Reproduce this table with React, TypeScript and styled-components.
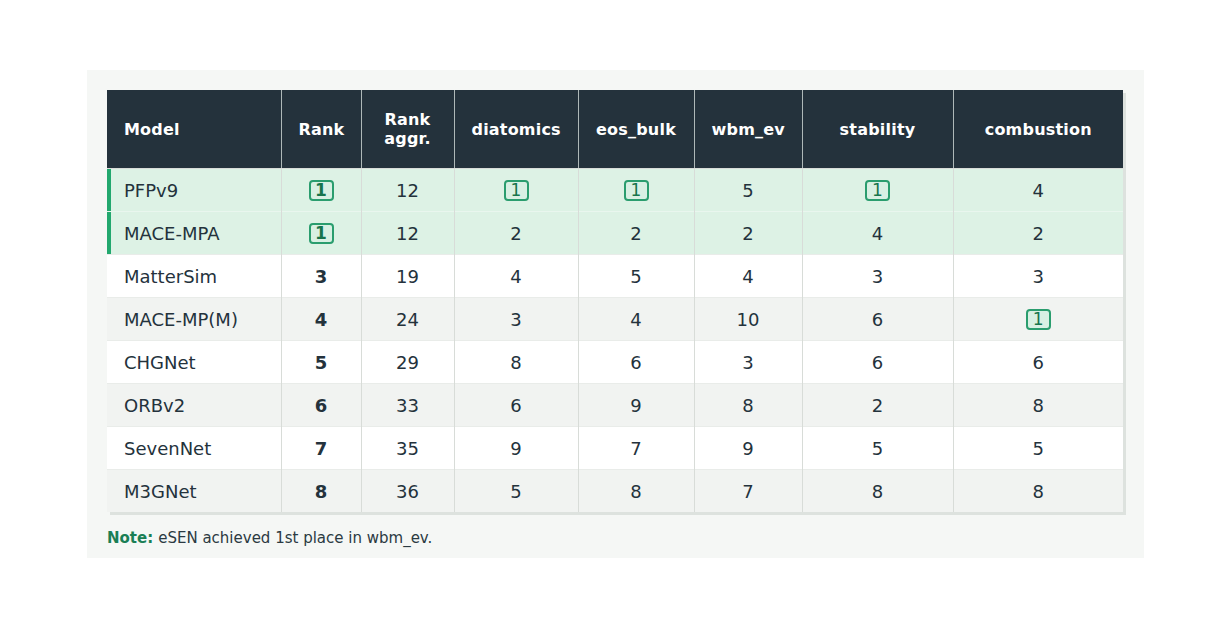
import React from 'react';
import styled, { createGlobalStyle } from 'styled-components';

const GlobalStyle = createGlobalStyle`
  html, body {
    margin: 0;
    padding: 0;
    background: #ffffff;
    font-family: 'DejaVu Sans', 'Liberation Sans', sans-serif;
  }
`;

const Page = styled.div`
  padding: 70px 0 0 87px;
`;

const Panel = styled.div`
  width: 1057px;
  box-sizing: border-box;
  background: #f5f7f5;
  padding: 20px 20px 10px 20px;
`;

const Table = styled.table`
  width: 1016px;
  border-collapse: collapse;
  table-layout: fixed;
  box-shadow: 3px 3px 0 #dde2de;
  color: #24323c;
`;

const HeadCell = styled.th<{ $left?: boolean }>`
  height: 78px;
  padding: 0 17px;
  background: #24323c;
  color: #ffffff;
  font-size: 16px;
  font-weight: bold;
  letter-spacing: 0.2px;
  line-height: 19px;
  text-align: ${({ $left }) => ($left ? 'left' : 'center')};
  border-left: 1px solid #aeb8b8;
  border-bottom: 1px solid #d8dcd8;
  &:first-child {
    border-left: none;
  }
`;

const Row = styled.tr<{ $tone: 'top' | 'plain' | 'stripe' }>`
  background: ${({ $tone }) =>
    $tone === 'top' ? '#ddf2e5' : $tone === 'stripe' ? '#f1f3f1' : '#ffffff'};
  border-top: 1px solid ${({ $tone }) => ($tone === 'top' ? '#e9f6ee' : '#e9ece9')};
`;

const Cell = styled.td<{ $left?: boolean; $bold?: boolean; $mark?: boolean }>`
  height: 42px;
  padding: 0 17px;
  font-size: 18px;
  font-weight: ${({ $bold }) => ($bold ? 'bold' : 'normal')};
  text-align: ${({ $left }) => ($left ? 'left' : 'center')};
  border-left: 1px solid #d8dcd8;
  box-shadow: ${({ $mark }) => ($mark ? 'inset 4px 0 0 #22a86e' : 'none')};
  &:first-child {
    border-left: none;
  }
`;

const Badge = styled.span<{ $bold?: boolean }>`
  display: inline-block;
  box-sizing: border-box;
  min-width: 25px;
  height: 21px;
  line-height: 17px;
  padding: 0 4px;
  border: 2px solid #2a9d6e;
  border-radius: 4px;
  background: #d8f0e3;
  color: #17744c;
  font-size: 17px;
  font-weight: ${({ $bold }) => ($bold ? 'bold' : 'normal')};
  vertical-align: middle;
`;

const Note = styled.p`
  margin: 16px 0 0 0;
  font-size: 15px;
  line-height: 20px;
  color: #2b3a42;
`;

const NoteLabel = styled.strong`
  color: #1a7f55;
  margin-right: 5px;
`;

const columns = [
  { key: 'model', label: 'Model', width: 174 },
  { key: 'rank', label: 'Rank', width: 80 },
  { key: 'aggr', label: 'Rank aggr.', width: 93 },
  { key: 'diatomics', label: 'diatomics', width: 124 },
  { key: 'eos', label: 'eos_bulk', width: 116 },
  { key: 'wbm', label: 'wbm_ev', width: 108 },
  { key: 'stability', label: 'stability', width: 151 },
  { key: 'combustion', label: 'combustion', width: 170 },
];

const rows: [string, number, number, number, number, number, number, number][] = [
  ['PFPv9', 1, 12, 1, 1, 5, 1, 4],
  ['MACE-MPA', 1, 12, 2, 2, 2, 4, 2],
  ['MatterSim', 3, 19, 4, 5, 4, 3, 3],
  ['MACE-MP(M)', 4, 24, 3, 4, 10, 6, 1],
  ['CHGNet', 5, 29, 8, 6, 3, 6, 6],
  ['ORBv2', 6, 33, 6, 9, 8, 2, 8],
  ['SevenNet', 7, 35, 9, 7, 9, 5, 5],
  ['M3GNet', 8, 36, 5, 8, 7, 8, 8],
];

export default function App() {
  return (
    <Page>
      <GlobalStyle />
      <Panel>
        <Table>
          <colgroup>
            {columns.map((c) => (
              <col key={c.key} style={{ width: c.width }} />
            ))}
          </colgroup>
          <thead>
            <tr>
              {columns.map((c, i) => (
                <HeadCell key={c.key} $left={i === 0}>
                  {c.key === 'aggr' ? (
                    <>
                      Rank
                      <br />
                      aggr.
                    </>
                  ) : (
                    c.label
                  )}
                </HeadCell>
              ))}
            </tr>
          </thead>
          <tbody>
            {rows.map((r, ri) => {
              const top = r[1] === 1;
              const tone = top ? 'top' : ri % 2 === 1 ? 'stripe' : 'plain';
              return (
                <Row key={r[0]} $tone={tone}>
                  <Cell $left $mark={top}>
                    {r[0]}
                  </Cell>
                  <Cell $bold>{r[1] === 1 ? <Badge $bold>1</Badge> : r[1]}</Cell>
                  <Cell>{r[2]}</Cell>
                  {r.slice(3).map((v, vi) => (
                    <Cell key={vi}>{v === 1 ? <Badge>1</Badge> : v}</Cell>
                  ))}
                </Row>
              );
            })}
          </tbody>
        </Table>
        <Note>
          <NoteLabel>Note:</NoteLabel>eSEN achieved 1st place in wbm_ev.
        </Note>
      </Panel>
    </Page>
  );
}
